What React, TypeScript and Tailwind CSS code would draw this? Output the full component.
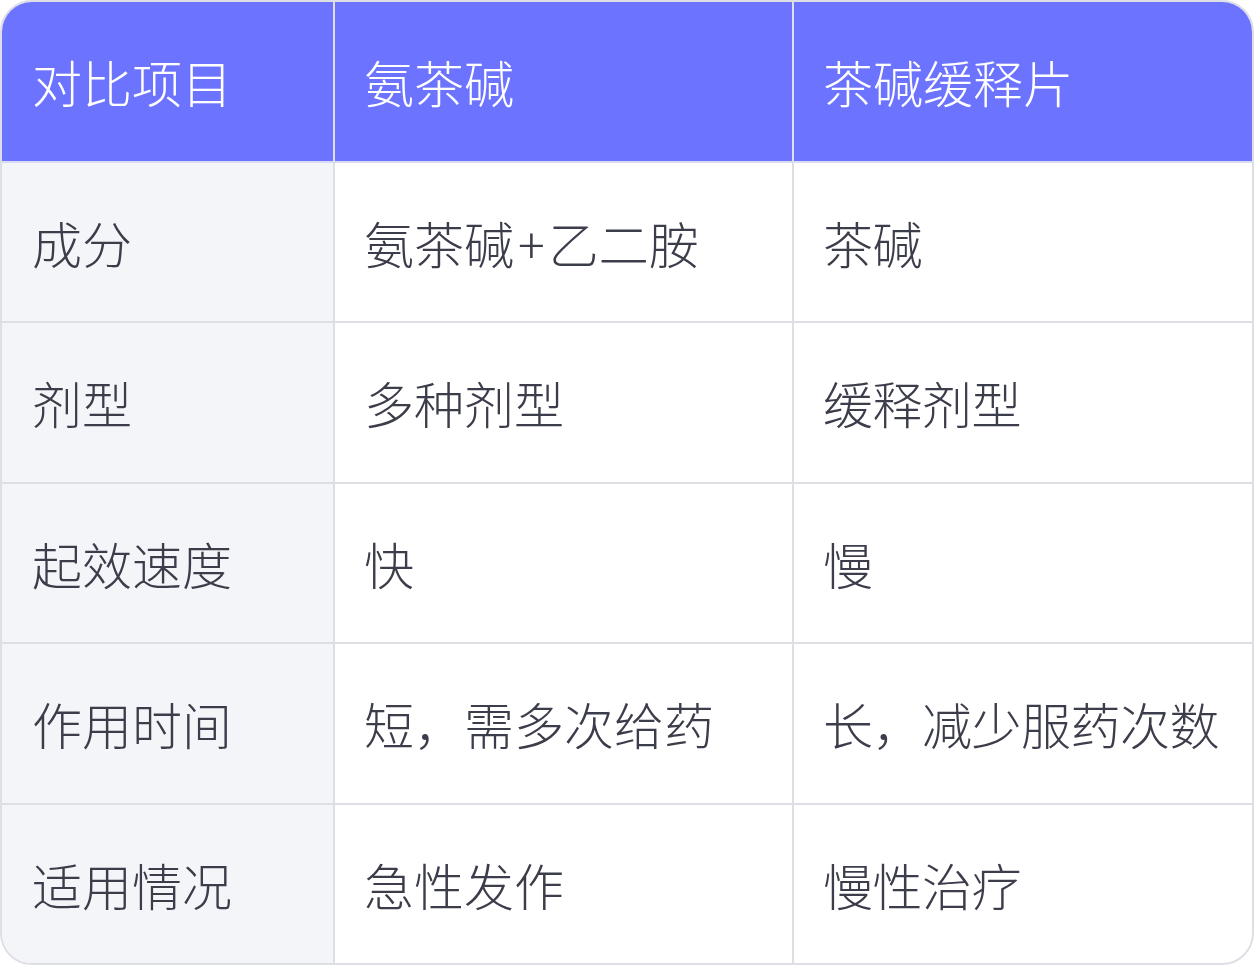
import React from "react";

const rows: [string, React.ReactNode, string][] = [
  ["成分", <>氨茶碱<span className="mx-[4px]">+</span>乙二胺</>, "茶碱"],
  ["剂型", "多种剂型", "缓释剂型"],
  ["起效速度", "快", "慢"],
  ["作用时间", "短，需多次给药", "长，减少服药次数"],
  ["适用情况", "急性发作", "慢性治疗"],
];

const font = { fontFamily: '"Noto Sans CJK SC", "Noto Sans", sans-serif' };

export default function App() {
  return (
    <div className="w-[1254px] h-[965px] bg-white" style={font}>
      <div className="h-full flex flex-col rounded-[32px] border-2 border-[#dedfe5] overflow-hidden text-[50px] font-light leading-none">
        <div className="flex-1 flex bg-[#6c73ff] text-white border-b-2 border-[#d9dbf3]">
          <div className="w-[333px] flex items-center px-[30px] border-r-2 border-[#dedfe5]">对比项目</div>
          <div className="w-[459px] flex items-center px-[29px] border-r-2 border-[#dedfe5]">氨茶碱</div>
          <div className="flex-1 flex items-center px-[29px]">茶碱缓释片</div>
        </div>
        {rows.map((r, i) => (
          <div
            key={i}
            className={`flex-1 flex text-[#3c3d4a] ${i < rows.length - 1 ? "border-b-2 border-[#dedfe5]" : ""}`}
          >
            <div className="w-[333px] flex items-center px-[30px] bg-[#f4f5f9] border-r-2 border-[#dedfe5]">{r[0]}</div>
            <div className="w-[459px] flex items-center px-[29px] border-r-2 border-[#dedfe5]">{r[1]}</div>
            <div className="flex-1 flex items-center px-[29px] whitespace-nowrap tracking-[-0.5px]">{r[2]}</div>
          </div>
        ))}
      </div>
    </div>
  );
}
